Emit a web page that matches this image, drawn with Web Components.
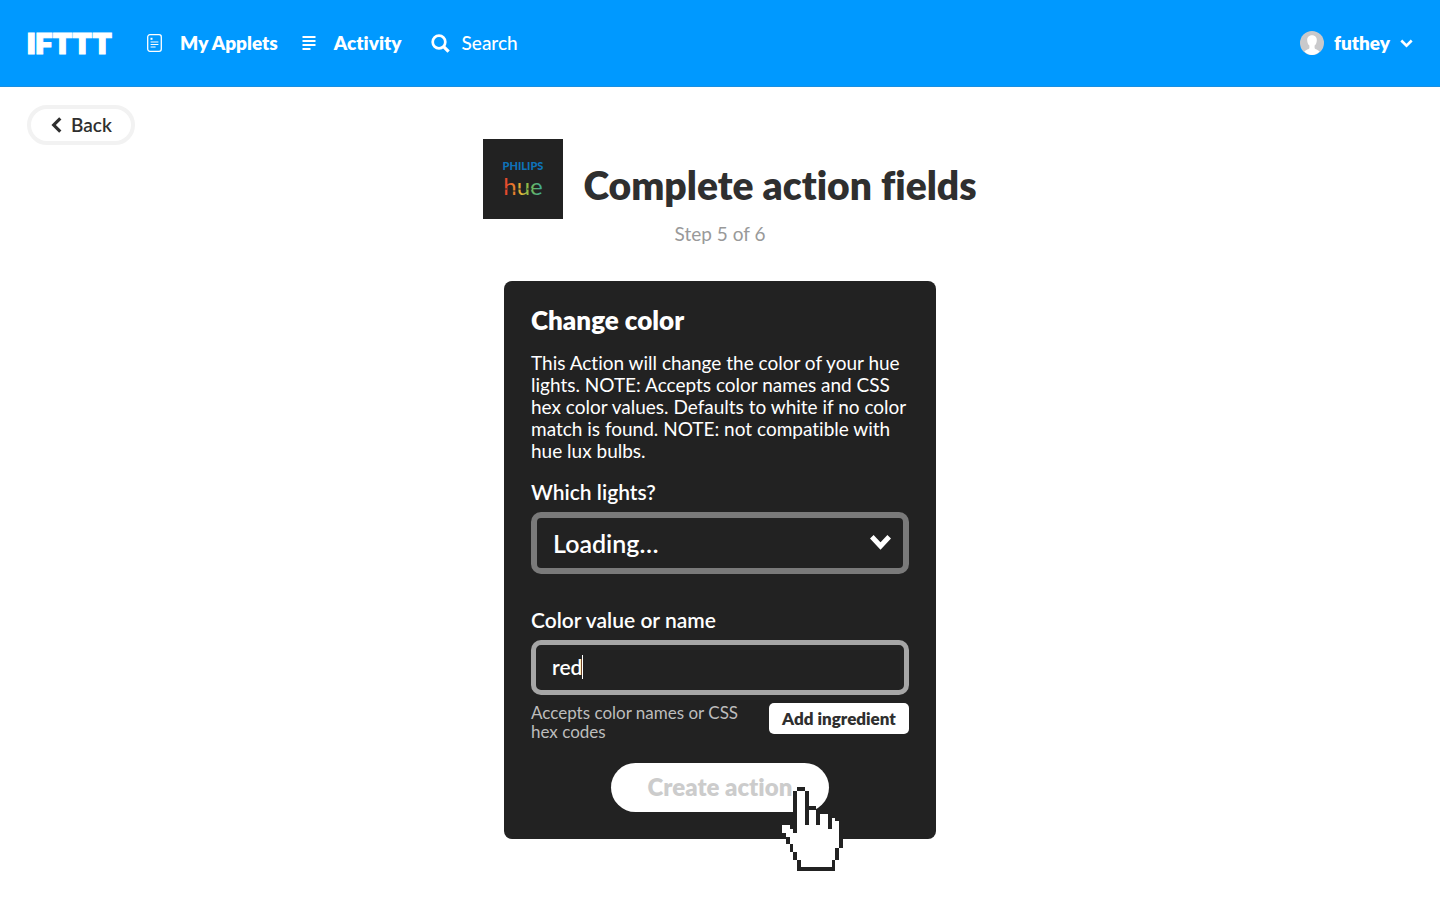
<!DOCTYPE html>
<html lang="en">
<head>
<meta charset="utf-8">
<meta name="viewport" content="width=device-width, initial-scale=1">
<title>Complete action fields</title>
<style>
  body { margin: 0; background: #fff; color: #2f2f2f; font-family: Lato, "Open Sans", sans-serif; font-size: 19px; font-variant-ligatures: none; }
</style>
</head>
<body>
<create-page></create-page>

<script>
const define = (name, html, setup) => {
  const template = document.createElement('template');
  template.innerHTML = `<style>*,*::before{box-sizing:border-box} button,input,select{font-variant-ligatures:none!important}</style>${html}`;
  customElements.define(name, class extends HTMLElement {
    constructor() {
      super();
      this.attachShadow({ mode: 'open' }).append(template.content.cloneNode(true));
    }
    connectedCallback() { if (setup) setup(this, this.shadowRoot); }
  });
};

define('brand-logo', `
<style>
  :host { display: block; }
  a { display: block; padding-top: 2px; color: #fff; text-decoration: none; font: 900 29px/32px Inter, sans-serif; -webkit-text-stroke: 1px #fff; }
</style>
<a href="#home">IFTTT</a>`);

define('nav-item', `
<style>
  :host { display: block; }
  a { display: flex; align-items: center; gap: var(--gap, 18px); color: #fff; text-decoration: none; font-size: 19px; line-height: 24px; font-weight: var(--weight, 800); white-space: nowrap; }
  ::slotted(svg) { display: block; flex: none; }
</style>
<a href="#"><slot name="icon"></slot><span><slot></slot></span></a>`);

define('user-menu', `
<style>
  :host { display: block; }
  button { display: flex; align-items: center; gap: 10px; padding: 0; border: 0; background: none; color: #fff; font: 800 19px/24px Lato, sans-serif; }
  svg { display: block; flex: none; }
</style>
<button type="button" aria-haspopup="true">
  <svg width="24" height="24" viewBox="0 0 24 24" aria-hidden="true">
    <circle cx="12" cy="12" r="12" fill="#c9c9cb"/>
    <path fill="#fff" d="M12 4.200c-3.100 0-5 2.200-4.800 5.200.1 2.100.9 4 2.200 5.200v2.300c-.4 1.400-3.600 1.700-5 3.600C6.500 22.800 9 24 12 24s5.500-1.200 7.600-3.500c-1.400-1.900-4.600-2.200-5-3.600v-2.300c1.300-1.200 2.100-3.100 2.200-5.200.2-3-1.700-5.200-4.800-5.200z"/>
  </svg>
  <span><slot></slot></span>
  <svg width="13" height="9" viewBox="0 0 13 9" aria-hidden="true"><path d="M1.300 1.500l5.200 5.200 5.200-5.200" fill="none" stroke="#fff" stroke-width="2.600"/></svg>
</button>`);

define('site-header', `
<style>
  :host { display: block; background: #0099ff; border-bottom: 1px solid #1a8fe0; }
  header { display: flex; align-items: center; justify-content: space-between; height: 86px; padding: 0 27px; }
  nav { display: flex; align-items: center; }
  .applets { margin-left: 35px; }
  .activity { margin-left: 24px; }
  .search { margin-left: 29px; --weight: 500; --gap: 12px; }
</style>
<header>
  <nav aria-label="Main">
    <brand-logo></brand-logo>
    <nav-item class="applets">
      <svg slot="icon" width="15" height="18" viewBox="0 0 15 18" fill="none" stroke="#fff"><rect x=".7" y=".7" width="13.600" height="16.600" rx="2.200" stroke-width="1.300"/><path d="M3.600 8h7.800M3.600 10.500h7.800M3.600 13h5" stroke-width="1.200"/><path d="M3.500 4.800h2" stroke-width="2"/></svg>
      My Applets
    </nav-item>
    <nav-item class="activity">
      <svg slot="icon" width="14" height="14" viewBox="0 0 14 14"><path d="M.5 1h13M.5 5h13M.5 9h13M.5 13h8" stroke="#fff" stroke-width="2"/></svg>
      Activity
    </nav-item>
    <nav-item class="search">
      <svg slot="icon" width="19" height="19" viewBox="0 0 19 19" fill="none" stroke="#fff"><circle cx="8" cy="8" r="6.300" stroke-width="2.700"/><path d="M12.600 12.600l5 5" stroke-width="3.200"/></svg>
      Search
    </nav-item>
  </nav>
  <user-menu>futhey</user-menu>
</header>`);

define('back-link', `
<style>
  :host { display: block; }
  a { display: inline-flex; align-items: center; gap: 9px; height: 40px; padding: 0 19px 0 20px; border: 4px solid #f2f2f2; border-radius: 20px; color: #2f2f2f; background: #fff; text-decoration: none; font-size: 19px; line-height: 24px; font-weight: 600; }
</style>
<a href="#back"><svg width="11" height="16" viewBox="0 0 11 16" aria-hidden="true"><path d="M9.300 1.300L2.700 8l6.600 6.700" fill="none" stroke="#2f2f2f" stroke-width="3.200"/></svg><slot></slot></a>`);

define('hue-badge', `
<style>
  :host { display: block; flex: none; width: 80px; height: 80px; background: #222; }
  svg { display: block; }
</style>
<svg width="80" height="80" viewBox="0 0 80 80" role="img" aria-label="Philips hue">
  <defs><linearGradient id="rainbow" gradientUnits="userSpaceOnUse" x1="20" x2="60" y1="0" y2="0">
    <stop offset="0" stop-color="#e5352d"/><stop offset=".25" stop-color="#e8762c"/><stop offset=".45" stop-color="#e5b336"/><stop offset=".65" stop-color="#7dbb4c"/><stop offset="1" stop-color="#37a6a0"/>
  </linearGradient></defs>
  <text x="40" y="31" text-anchor="middle" font-family="Lato" font-weight="900" font-size="11" fill="#0e72b9">PHILIPS</text>
  <text x="40" y="56" text-anchor="middle" font-family="Lato" font-weight="400" font-size="24" fill="url(#rainbow)">hue</text>
  <path d="M19 50h5M29 52h5M34 50h5M44 50h5" stroke="#222" stroke-width="1"/>
</svg>`);

define('step-heading', `
<style>
  :host { display: block; text-align: center; }
  .row { display: flex; justify-content: center; }
  hue-badge { margin: 0 20px; }
  h1 { margin: 0; padding-top: 21px; font-size: 39px; line-height: 50px; font-weight: 800; color: #2f2f2f; }
  p { margin: 4px 0 0; font-size: 19px; line-height: 22px; color: #999; }
</style>
<div class="row"><hue-badge></hue-badge><h1><slot></slot></h1></div>
<p><slot name="step"></slot></p>`);

define('select-field', `
<style>
  :host { display: block; }
  label { display: block; font-size: 21px; line-height: 28px; font-weight: 600; }
  .box { display: grid; align-items: center; margin-top: 6px; }
  select, svg { grid-area: 1 / 1; }
  select { appearance: none; width: 100%; height: 62px; padding: 0 16px; border: 6px solid #7a7a7a; border-radius: 10px; background: #222; color: #fff; font: 600 25px/30px Lato, sans-serif; }
  svg { justify-self: end; margin: 0 18px 2px 0; pointer-events: none; }
</style>
<label for="control"></label>
<div class="box">
  <select id="control"><option></option></select>
  <svg width="21" height="15" viewBox="0 0 21 15" aria-hidden="true"><path d="M1.800 1.800l8.700 9.200 8.700-9.200" fill="none" stroke="#fff" stroke-width="5"/></svg>
</div>`, (host, root) => {
  root.querySelector('label').textContent = host.getAttribute('label');
  root.querySelector('option').textContent = host.getAttribute('value');
});

define('text-field', `
<style>
  :host { display: block; }
  label { display: block; font-size: 21px; line-height: 28px; font-weight: 600; }
  .box { position: relative; margin-top: 6px; }
  input { display: block; width: 100%; height: 55px; padding: 0 16px 2px; border: 5px solid #a6a6a6; border-radius: 10px; outline: 0; background: #222; color: #fff; font: 600 21px/26px Lato, sans-serif; }
  .caret { position: absolute; left: 51px; top: 15px; width: 1px; height: 24px; background: #fff; }
  .foot { display: flex; justify-content: space-between; align-items: flex-start; margin-top: 8px; }
  small { max-width: 214px; font-size: 17px; line-height: 19px; color: #bdbdbd; }
  button { flex: none; width: 140px; height: 31px; padding: 0; border: 0; border-radius: 5px; background: #fff; color: #2f2f2f; font: 800 17px/20px Lato, sans-serif; }
</style>
<label for="control"></label>
<div class="box"><input id="control" type="text" aria-describedby="hint"><span class="caret"></span></div>
<div class="foot"><small id="hint"><slot name="hint"></slot></small><button type="button"><slot name="button"></slot></button></div>`, (host, root) => {
  root.querySelector('label').textContent = host.getAttribute('label');
  root.querySelector('input').value = host.getAttribute('value');
});

define('pixel-hand', `
<style>:host { display: block; pointer-events: none; } svg { display: block; }</style>
<svg width="65" height="84" viewBox="-1 0 17 22" shape-rendering="crispEdges" aria-hidden="true">
  <path fill="#fff" d="M4 1h2v9h1V6h2v4h1V7h2v4h1V8h1v1h1v7h-1v3h-1v2H5v-2H4v-2H3v-2H2v-2H1v-1H0v-2h2v1h1v1h1z"/>
  <path fill="#222" d="M4 0h2v1H4zM3 1h1v11H3zM6 1h1v9H6zM7 5h2v1H7zM9 6h1v4H9zM10 6h2v1h-2zM12 7h1v4h-1zM13 7h1v1h-1zM14 8h1v1h-1zM15 9h1v7h-1zM14 16h1v3h-1zM13 19h1v3h-1zM4 21h10v1H4zM4 19h1v2H4zM3 17h1v2H3zM2 15h1v2H2zM1 13h1v2H1zM0 12h1v1H0zM-1 10h1v2h-1zM0 9h2v1H0zM2 10h1v1H2z"/>
</svg>`);

define('action-card', `
<style>
  :host { display: block; position: relative; max-width: 432px; margin: 0 auto; padding: 22px 27px 27px; border-radius: 8px; background: #222; color: #fff; box-sizing: border-box; }
  h2 { margin: 0; font-size: 26px; line-height: 34px; font-weight: 800; }
  p { margin: 15px 0 16px; font-size: 19px; line-height: 22px; }
  select-field { margin-bottom: 32px; }
  .submit { display: block; width: 218px; height: 49px; margin: 22px auto 0; padding: 0 0 2px; border: 0; border-radius: 25px; background: #fff; color: #ccc; font: 800 24px/28px Lato, sans-serif; }
  pixel-hand { position: absolute; right: 93px; bottom: -32px; }
</style>
<form>
  <h2>Change color</h2>
  <p>This Action will change the color of your hue lights. NOTE: Accepts color names and CSS hex color values. Defaults to white if no color match is found. NOTE: not compatible with hue lux bulbs.</p>
  <select-field label="Which lights?" value="Loading…"></select-field>
  <text-field label="Color value or name" value="red">
    <span slot="hint">Accepts color names or CSS hex codes</span>
    <span slot="button">Add ingredient</span>
  </text-field>
  <button class="submit" type="button">Create action</button>
</form>
<pixel-hand></pixel-hand>`);

define('create-page', `
<style>
  :host { display: block; }
  main { display: grid; padding: 18px 27px 32px; }
  back-link { justify-self: start; }
  step-heading { margin-top: -6px; }
  action-card { width: 100%; margin-top: 36px; }
</style>
<site-header></site-header>
<main>
  <back-link>Back</back-link>
  <step-heading>Complete action fields<span slot="step">Step 5 of 6</span></step-heading>
  <action-card></action-card>
</main>`);
</script>
</body>
</html>
